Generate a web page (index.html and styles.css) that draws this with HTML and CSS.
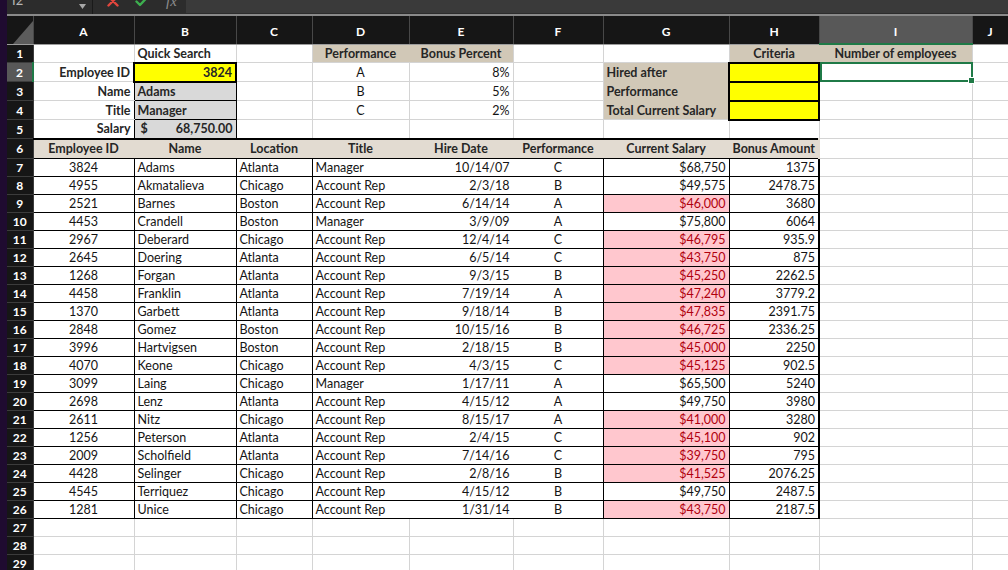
FILE: index.html
```html
<!DOCTYPE html>
<html lang="en">
<head>
  <meta charset="UTF-8">
  <meta name="viewport" content="width=device-width, initial-scale=1.0">
  <title>Employee Bonus Sheet</title>
  <link rel="stylesheet" href="styles.css">
</head>
<body>

  <div class="window">

    <!-- Formula bar (cut off at the top of the window) -->
    <div class="formula-bar">
      <div class="name-box">
        <span class="cell-ref">I2</span>
        <svg class="dropdown" width="7" height="5" viewBox="0 0 7 5"><path d="M0 0 H7 L3.5 5 Z" fill="#a8a8a8"/></svg>
      </div>
      <div class="bar-buttons">
        <svg class="cancel" width="12" height="14" viewBox="0 0 12 14"><path d="M1.5 2.5 L10.5 11.5 M10.5 2.5 L1.5 11.5" stroke="#e2463d" stroke-width="2.4" stroke-linecap="round"/></svg>
        <svg class="enter" width="14" height="14" viewBox="0 0 14 14"><path d="M1.5 7.5 L5 11 L12.5 3" fill="none" stroke="#3daf4f" stroke-width="2.4" stroke-linecap="round" stroke-linejoin="round"/></svg>
        <span class="fx">fx</span>
      </div>
      <div class="formula-input"></div>
    </div>

    <!-- Worksheet -->
    <table class="sheet">
      <colgroup>
        <col class="w-head">
        <col class="w-a">
        <col class="w-b">
        <col class="w-c">
        <col class="w-d">
        <col class="w-e">
        <col class="w-f">
        <col class="w-g">
        <col class="w-h">
        <col class="w-i">
        <col class="w-j">
      </colgroup>
      <thead>
        <tr class="col-heads">
          <th class="corner"><svg width="20" height="23" viewBox="0 0 20 23"><path d="M20 0 V23 H0 Z" fill="#5c5c5c"/></svg></th>
          <th>A</th><th>B</th><th>C</th><th>D</th><th>E</th><th>F</th><th>G</th><th>H</th><th class="active">I</th><th>J</th>
        </tr>
      </thead>
      <tbody>
        <tr class="tall">
          <th>1</th>
          <td></td>
          <td class="b">Quick Search</td>
          <td></td>
          <td class="b c tan join-r">Performance</td>
          <td class="b c tan">Bonus Percent</td>
          <td></td>
          <td></td>
          <td class="b c tan join-r">Criteria</td>
          <td class="b c tan">Number of employees</td>
          <td></td>
        </tr>
        <tr class="tall">
          <th class="active">2</th>
          <td class="b r">Employee ID</td>
          <td class="b r yel box">3824</td>
          <td></td>
          <td class="c">A</td>
          <td class="r">8%</td>
          <td></td>
          <td class="b tan join-b">Hired after</td>
          <td class="yel box"></td>
          <td class="selected"></td>
          <td></td>
        </tr>
        <tr class="tall">
          <th>3</th>
          <td class="b r edge">Name</td>
          <td class="b gry lined">Adams</td>
          <td></td>
          <td class="c">B</td>
          <td class="r">5%</td>
          <td></td>
          <td class="b tan join-b">Performance</td>
          <td class="yel box"></td>
          <td></td>
          <td></td>
        </tr>
        <tr class="tall">
          <th>4</th>
          <td class="b r edge">Title</td>
          <td class="b gry lined">Manager</td>
          <td></td>
          <td class="c">C</td>
          <td class="r">2%</td>
          <td></td>
          <td class="b tan">Total Current Salary</td>
          <td class="yel box"></td>
          <td></td>
          <td></td>
        </tr>
        <tr class="tall">
          <th>5</th>
          <td class="b r edge">Salary</td>
          <td class="b r gry lined"><span class="cur">$</span>68,750.00</td>
          <td></td><td></td><td></td><td></td><td></td><td></td><td></td><td></td>
        </tr>

        <!-- Employee table -->
        <tr class="tall table-head">
          <th>6</th>
          <td class="c">Employee ID</td>
          <td class="c">Name</td>
          <td class="c">Location</td>
          <td class="c">Title</td>
          <td class="c">Hire Date</td>
          <td class="c">Performance</td>
          <td class="c">Current Salary</td>
          <td class="c end">Bonus Amount</td>
          <td></td>
          <td></td>
        </tr>
        <tr class="data"><th>7</th><td class="c">3824</td><td>Adams</td><td>Atlanta</td><td class="open">Manager</td><td class="r open">10/14/07</td><td class="c">C</td><td class="r">$68,750</td><td class="r end">1375</td><td></td><td></td></tr>
        <tr class="data"><th>8</th><td class="c">4955</td><td>Akmatalieva</td><td>Chicago</td><td class="open">Account Rep</td><td class="r open">2/3/18</td><td class="c">B</td><td class="r">$49,575</td><td class="r end">2478.75</td><td></td><td></td></tr>
        <tr class="data"><th>9</th><td class="c">2521</td><td>Barnes</td><td>Boston</td><td class="open">Account Rep</td><td class="r open">6/14/14</td><td class="c">A</td><td class="r pink">$46,000</td><td class="r end">3680</td><td></td><td></td></tr>
        <tr class="data"><th>10</th><td class="c">4453</td><td>Crandell</td><td>Boston</td><td class="open">Manager</td><td class="r open">3/9/09</td><td class="c">A</td><td class="r">$75,800</td><td class="r end">6064</td><td></td><td></td></tr>
        <tr class="data"><th>11</th><td class="c">2967</td><td>Deberard</td><td>Chicago</td><td class="open">Account Rep</td><td class="r open">12/4/14</td><td class="c">C</td><td class="r pink">$46,795</td><td class="r end">935.9</td><td></td><td></td></tr>
        <tr class="data"><th>12</th><td class="c">2645</td><td>Doering</td><td>Atlanta</td><td class="open">Account Rep</td><td class="r open">6/5/14</td><td class="c">C</td><td class="r pink">$43,750</td><td class="r end">875</td><td></td><td></td></tr>
        <tr class="data"><th>13</th><td class="c">1268</td><td>Forgan</td><td>Atlanta</td><td class="open">Account Rep</td><td class="r open">9/3/15</td><td class="c">B</td><td class="r pink">$45,250</td><td class="r end">2262.5</td><td></td><td></td></tr>
        <tr class="data"><th>14</th><td class="c">4458</td><td>Franklin</td><td>Atlanta</td><td class="open">Account Rep</td><td class="r open">7/19/14</td><td class="c">A</td><td class="r pink">$47,240</td><td class="r end">3779.2</td><td></td><td></td></tr>
        <tr class="data"><th>15</th><td class="c">1370</td><td>Garbett</td><td>Atlanta</td><td class="open">Account Rep</td><td class="r open">9/18/14</td><td class="c">B</td><td class="r pink">$47,835</td><td class="r end">2391.75</td><td></td><td></td></tr>
        <tr class="data"><th>16</th><td class="c">2848</td><td>Gomez</td><td>Boston</td><td class="open">Account Rep</td><td class="r open">10/15/16</td><td class="c">B</td><td class="r pink">$46,725</td><td class="r end">2336.25</td><td></td><td></td></tr>
        <tr class="data"><th>17</th><td class="c">3996</td><td>Hartvigsen</td><td>Boston</td><td class="open">Account Rep</td><td class="r open">2/18/15</td><td class="c">B</td><td class="r pink">$45,000</td><td class="r end">2250</td><td></td><td></td></tr>
        <tr class="data"><th>18</th><td class="c">4070</td><td>Keone</td><td>Chicago</td><td class="open">Account Rep</td><td class="r open">4/3/15</td><td class="c">C</td><td class="r pink">$45,125</td><td class="r end">902.5</td><td></td><td></td></tr>
        <tr class="data"><th>19</th><td class="c">3099</td><td>Laing</td><td>Chicago</td><td class="open">Manager</td><td class="r open">1/17/11</td><td class="c">A</td><td class="r">$65,500</td><td class="r end">5240</td><td></td><td></td></tr>
        <tr class="data"><th>20</th><td class="c">2698</td><td>Lenz</td><td>Atlanta</td><td class="open">Account Rep</td><td class="r open">4/15/12</td><td class="c">A</td><td class="r">$49,750</td><td class="r end">3980</td><td></td><td></td></tr>
        <tr class="data"><th>21</th><td class="c">2611</td><td>Nitz</td><td>Chicago</td><td class="open">Account Rep</td><td class="r open">8/15/17</td><td class="c">A</td><td class="r pink">$41,000</td><td class="r end">3280</td><td></td><td></td></tr>
        <tr class="data"><th>22</th><td class="c">1256</td><td>Peterson</td><td>Atlanta</td><td class="open">Account Rep</td><td class="r open">2/4/15</td><td class="c">C</td><td class="r pink">$45,100</td><td class="r end">902</td><td></td><td></td></tr>
        <tr class="data"><th>23</th><td class="c">2009</td><td>Scholfield</td><td>Atlanta</td><td class="open">Account Rep</td><td class="r open">7/14/16</td><td class="c">C</td><td class="r pink">$39,750</td><td class="r end">795</td><td></td><td></td></tr>
        <tr class="data"><th>24</th><td class="c">4428</td><td>Selinger</td><td>Chicago</td><td class="open">Account Rep</td><td class="r open">2/8/16</td><td class="c">B</td><td class="r pink">$41,525</td><td class="r end">2076.25</td><td></td><td></td></tr>
        <tr class="data"><th>25</th><td class="c">4545</td><td>Terriquez</td><td>Chicago</td><td class="open">Account Rep</td><td class="r open">4/15/12</td><td class="c">B</td><td class="r">$49,750</td><td class="r end">2487.5</td><td></td><td></td></tr>
        <tr class="data"><th>26</th><td class="c">1281</td><td>Unice</td><td>Chicago</td><td class="open">Account Rep</td><td class="r open">1/31/14</td><td class="c">B</td><td class="r pink">$43,750</td><td class="r end">2187.5</td><td></td><td></td></tr>

        <tr><th>27</th><td></td><td></td><td></td><td></td><td></td><td></td><td></td><td></td><td></td><td></td></tr>
        <tr><th>28</th><td></td><td></td><td></td><td></td><td></td><td></td><td></td><td></td><td></td><td></td></tr>
        <tr><th>29</th><td></td><td></td><td></td><td></td><td></td><td></td><td></td><td></td><td></td><td></td></tr>
      </tbody>
    </table>

  </div>

</body>
</html>
```

FILE: styles.css
```css
body {
  margin: 0;
  padding: 0 0 0 7px;
  background-color: #1f0b30;
  font-family: 'Lato', 'Liberation Sans', sans-serif;
  overflow: hidden;
}


.window {
  width: 1001px;
  height: 570px;
  background-color: #fff;
  overflow: hidden;
}


/* Formula bar */

.formula-bar {
  display: flex;
  height: 14px;
  background-color: #2c2c2c;
  border-bottom: 2px solid #8a8a8a;
  overflow: hidden;
}


.name-box {
  width: 86px;
  display: flex;
  justify-content: space-between;
  align-items: flex-start;
  padding: 0 6px 0 5px;
  box-sizing: border-box;
  border-right: 1px solid #1a1a1a;
}


.cell-ref {
  color: #b5b5b5;
  font-size: 13px;
  line-height: 13px;
  margin-top: -6px;
}


.dropdown {
  margin-top: 4px;
}


.bar-buttons {
  width: 93px;
  display: flex;
  align-items: flex-start;
  padding-left: 14px;
  gap: 16px;
  box-sizing: border-box;
}


.bar-buttons svg {
  margin-top: -6px;
}


.fx {
  color: #8c8c8c;
  font-family: 'Liberation Serif', serif;
  font-style: italic;
  font-size: 15px;
  line-height: 15px;
  margin-top: -6px;
  margin-left: 1px;
}


.formula-input {
  flex: 1;
  background-color: #3a3a3a;
  margin-bottom: 1px;
}


/* Sheet grid */

.sheet {
  width: 1001px;
  table-layout: fixed;
  border-collapse: collapse;
  font-size: 12.5px;
  color: #141414;
}


.w-head { width: 26px; }
.w-a { width: 101px; }
.w-b { width: 102px; }
.w-c { width: 76px; }
.w-d { width: 97px; }
.w-e { width: 104px; }
.w-f { width: 90px; }
.w-g { width: 126px; }
.w-h { width: 90px; }
.w-i { width: 153px; }
.w-j { width: 36px; }


.sheet td {
  height: 17px;
  padding: 0 3px;
  line-height: 15px;
  border: 1px solid #d4d4d4;
  white-space: nowrap;
  overflow: hidden;
}


.sheet tr.table-head td {
  height: 18px;
}


.col-heads th {
  height: 24px;
  padding: 3px 0 0;
  background-color: #161616;
  color: #fff;
  font-size: 12px;
  font-weight: bold;
  border-right: 1px solid #484848;
  border-bottom: 1px solid #9c9c9c;
}


.col-heads th.active {
  background-color: #585858;
  border-bottom: 2px solid #1f7a47;
}


.col-heads th.corner {
  padding: 0;
  text-align: right;
  vertical-align: bottom;
  line-height: 0;
}


tbody th {
  background-color: #161616;
  color: #fff;
  font-size: 12px;
  font-weight: bold;
  padding: 0;
  border-bottom: 1px solid #3c3c3c;
  border-right: 1px solid #3c3c3c;
}


tbody th.active {
  background-color: #585858;
  border-right: 2px solid #1f7a47;
}


/* Cell formats */

.b { font-weight: bold; color: #262626; }
.c { text-align: center; }
.r { text-align: right; }


.tan {
  background-color: #d1c8b7;
}


.sheet td.join-r {
  border-right-color: #d1c8b7;
}


.sheet td.join-b {
  border-bottom-color: #d1c8b7;
}


.yel {
  background-color: #ffff00;
}


.sheet td.box {
  border: 2px solid #000;
}


.gry {
  background-color: #d9d9d9;
}


.sheet td.lined {
  border: 1px solid #000;
}


.sheet td.edge {
  border-right-color: #000;
}


.cur {
  float: left;
  padding-left: 3px;
}


.sheet td.selected {
  position: relative;
  overflow: visible;
}


.selected::after {
  content: '';
  position: absolute;
  top: -1px;
  left: 0;
  right: -1px;
  bottom: -1px;
  border: 2px solid #1f7a47;
}


.selected::before {
  content: '';
  position: absolute;
  right: -3px;
  bottom: -3px;
  width: 5px;
  height: 5px;
  background-color: #1f7a47;
  border: 1px solid #fff;
  z-index: 1;
}


/* Employee table */

.sheet .table-head td:nth-of-type(-n+8) {
  font-weight: bold;
  color: #262626;
  background-color: #e2dbd1;
  border-top: 2px solid #000;
  border-bottom: 1px solid #000;
  border-left-color: #e2dbd1;
  border-right-color: #e2dbd1;
}


.sheet .data td:nth-of-type(-n+8) {
  border-top: 1px solid #000;
  border-bottom: 1px solid #000;
  border-right-color: #000;
  background-color: #fff;
}


.sheet .data td.open {
  border-right-color: #fff;
}


.sheet td.end {
  border-right: 2px solid #000;
}


.pink {
  background-color: #ffc7ce !important;
  color: #b0000e;
}
```
